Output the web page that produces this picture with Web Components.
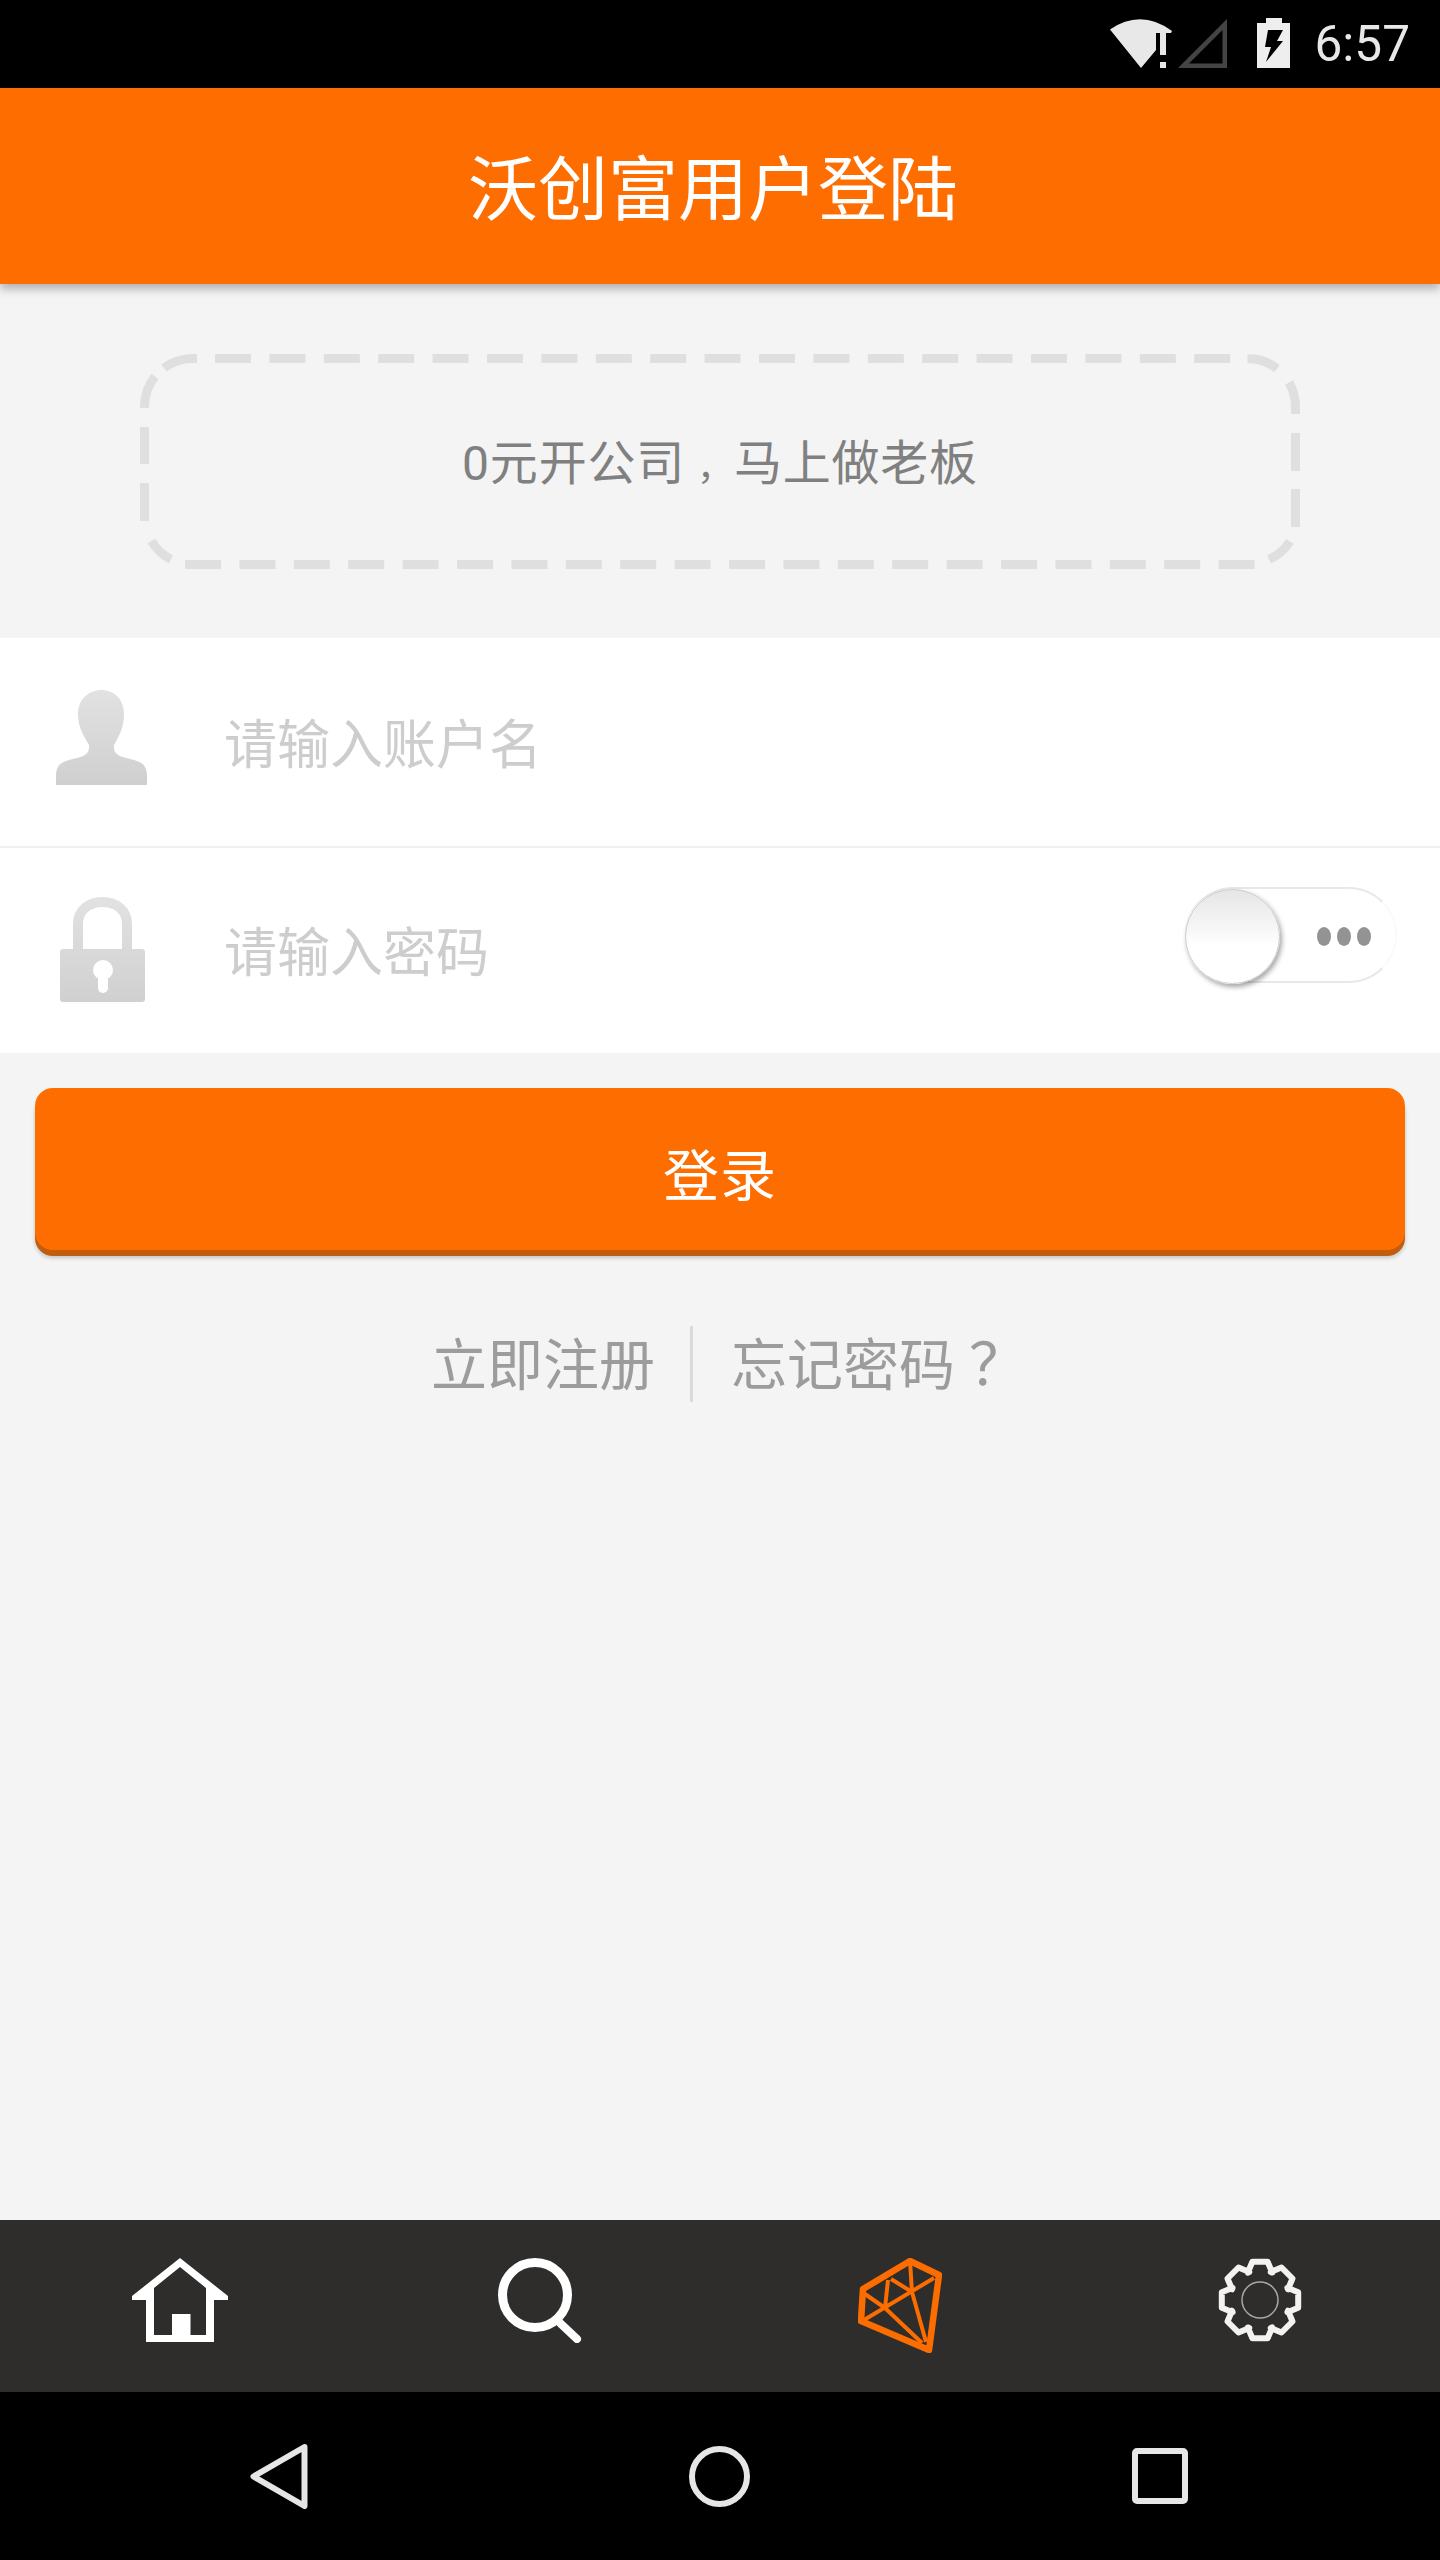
<!DOCTYPE html>
<html lang="zh-CN">
<head>
<meta charset="utf-8">
<title>沃创富用户登陆</title>
<style>
html, body { margin: 0; padding: 0; }
body {
  width: 1440px;
  height: 2560px;
  display: flex;
  flex-direction: column;
  background: #f4f4f4;
  font-family: Roboto, "Noto Sans CJK SC", sans-serif;
  overflow: hidden;
}
login-page { flex: 1; }
</style>
</head>
<body>
<status-bar time="6:57"></status-bar>
<app-header>沃创富用户登陆</app-header>
<login-page>
  <promo-banner>0元开公司<span style="padding-left:12px;font-size:36px">，</span>马上做老板</promo-banner>
  <login-form>
    <input-row placeholder="请输入账户名">
      <svg slot="icon" style="margin-bottom:9px" width="91" height="95" viewBox="0 0 91 95">
        <defs><linearGradient id="pg" x1="0" y1="0" x2="0" y2="1"><stop offset="0" stop-color="#e2e2e2"/><stop offset="1" stop-color="#cfcfcf"/></linearGradient></defs>
        <path fill="url(#pg)" d="M45.5 0C58 0 68 9 68 24C68 38 63 46 58 55C57 63 62 66 70 68C82 71 91 72 91 86V95H0V86C0 72 9 71 21 68C29 66 34 63 33 55C28 46 22 38 22 24C22 9 33 0 45.5 0Z"/>
      </svg>
    </input-row>
    <input-row placeholder="请输入密码" divider>
      <svg slot="icon" style="margin-bottom:2px" width="85" height="105" viewBox="0 0 85 105">
        <defs><linearGradient id="lg" gradientUnits="userSpaceOnUse" x1="0" y1="0" x2="0" y2="105"><stop offset="0" stop-color="#e2e2e2"/><stop offset="1" stop-color="#d0d0d0"/></linearGradient></defs>
        <path fill="none" stroke="url(#lg)" stroke-width="10" d="M18 54V27C18 13 29 5 42.5 5C56 5 67 13 67 27V54"/>
        <rect x="0" y="52" width="85" height="53" rx="3" fill="url(#lg)"/>
        <circle cx="43" cy="73" r="10" fill="#fff"/>
        <rect x="38" y="73" width="10" height="23" rx="5" fill="#fff"/>
      </svg>
      <toggle-switch slot="end"></toggle-switch>
    </input-row>
  </login-form>
  <primary-button>登录</primary-button>
  <link-row>
    <span>立即注册</span>
    <span>忘记密码<span style="font-family:'Noto Sans CJK JP';font-size:58px;line-height:0;padding-left:14px">？</span></span>
  </link-row>
</login-page>
<tab-bar>
  <tab-item>
    <svg width="96" height="84" viewBox="0 0 96 84"><path fill="#fff" fill-rule="evenodd" d="M48 0L96 38V42H82V84H14V42H0V38ZM48 9L22 30V77H40V56H58.5V77H74V30Z"/></svg>
  </tab-item>
  <tab-item>
    <svg width="84" height="85" viewBox="0 0 84 85"><circle cx="37" cy="37" r="32.500" fill="none" stroke="#fff" stroke-width="9"/><path d="M62 65L79 81" stroke="#fff" stroke-width="8" stroke-linecap="round"/></svg>
  </tab-item>
  <tab-item>
    <svg width="84" height="95" viewBox="0 0 84 95" fill="none" stroke="#fb6d00" stroke-linejoin="round">
      <path stroke-width="6.500" d="M52 3L81 17L71 92L3 63L5 31Z"/>
      <path stroke-width="4" d="M6 62L76 20M52 3L54 34L68 84M30 22L27 50M7 36L27 50L64 85M33 21L54 34"/>
    </svg>
  </tab-item>
  <tab-item><gear-icon></gear-icon></tab-item>
</tab-bar>
<nav-bar></nav-bar>

<script>
const statusTpl = document.createElement("template");
statusTpl.innerHTML = `
<style>
:host{ display:flex; height:88px; background:#000; align-items:flex-start; padding-right:30px; justify-content:flex-end; box-sizing:border-box; color:#e8e8e8; }
svg{ display:block; margin-top:19px; }
.signal{ margin-left:6px; }
.battery{ margin-left:30px; margin-top:18px; }
.time{ margin-left:25px; font:49.5px/88px Roboto, sans-serif; }
</style>
<svg width="62" height="49" viewBox="0 0 62 49"><path fill="#e8e8e8" d="M0 10.5Q31 -10.500 62 12L61 14H46V31L31 49Z"/><rect x="50" y="14" width="6" height="22" fill="#e8e8e8"/><rect x="50" y="43" width="6" height="6" fill="#e8e8e8"/></svg>
<svg class="signal" width="49" height="49" viewBox="0 0 49 49"><path fill="#444" fill-rule="evenodd" d="M0 49L49 0V49ZM11 44.500H44.500V11Z"/></svg>
<svg class="battery" width="33" height="50" viewBox="0 0 33 50"><path fill="#eee" d="M9 0H25V5H33V50H0V5H9Z"/><path fill="#000" d="M11 12H26L20 23H26L9 44L14 29H8Z"/></svg>
<span class="time"></span>
`;
class StatusBar extends HTMLElement {
  constructor() {
    super();
    this.attachShadow({ mode: "open" });
    this.shadowRoot.appendChild(statusTpl.content.cloneNode(true));
    this.shadowRoot.querySelector(".time").textContent = this.getAttribute("time");
  }
}
customElements.define("status-bar", StatusBar);

class AppHeader extends HTMLElement {
  constructor() {
    super();
    this.attachShadow({ mode: "open" }).innerHTML = `
<style>
:host{ display:flex; position:relative; z-index:1; height:196px; box-sizing:border-box; background:#fd6d00; color:#fff; align-items:center; justify-content:center; padding:0 14px 3px 0; font-size:70px; box-shadow:0 5px 9px rgba(0,0,0,.28); }
</style>
<slot></slot>`;
  }
}
customElements.define("app-header", AppHeader);

class LoginPage extends HTMLElement {
  constructor() {
    super();
    this.attachShadow({ mode: "open" }).innerHTML = `
<style>:host{ display:block; }</style>
<slot></slot>`;
  }
}
customElements.define("login-page", LoginPage);

class PromoBanner extends HTMLElement {
  constructor() {
    super();
    this.attachShadow({ mode: "open" }).innerHTML = `
<style>
:host{ display:block; padding:70px 140px 69px; }
.box{ position:relative; height:215px; box-sizing:border-box; padding-bottom:6px; display:flex; align-items:center; justify-content:center; color:#808080; font-size:48px; letter-spacing:.8px; }
.text{ display:block; }
svg{ position:absolute; left:0; top:0; }
</style>
<div class="box">
  <svg width="1160" height="215" viewBox="0 0 1160 215" fill="none" stroke="#dfdfdf" stroke-width="9">
    <path stroke-dasharray="36 18.400" d="M75 4.500H1108.600M45 210.500H1114.600"/>
    <path d="M1107.500 4.500H1108.600M1107.500 4.500A48 48 0 0 1 1137 14.600M1149 28.500A48 48 0 0 1 1155.500 52.500V60"/>
    <path d="M1155.500 79V117M1155.500 135V173M1150 187.500A48 48 0 0 1 1129 205.400"/>
    <path d="M11.500 187A48 48 0 0 0 31 205.400M4.500 73V110M4.500 129V167M4.500 54V52.500A48 48 0 0 1 15 22.500M24 14A48 48 0 0 1 52.500 4.500H57"/>
  </svg>
  <div class="text"><slot></slot></div>
</div>`;
  }
}
customElements.define("promo-banner", PromoBanner);

class LoginForm extends HTMLElement {
  constructor() {
    super();
    this.attachShadow({ mode: "open" }).innerHTML = `
<style>:host{ display:block; background:#fff; }</style>
<slot></slot>`;
  }
}
customElements.define("login-form", LoginForm);

class InputRow extends HTMLElement {
  constructor() {
    super();
    this.attachShadow({ mode: "open" }).innerHTML = `
<style>
:host{ display:flex; align-items:center; height:208px; box-sizing:border-box; padding-right:43px; }
:host([divider]){ height:207px; border-top:2px solid #f0f0f0; }
.icon{ width:224px; flex:none; box-sizing:border-box; padding-left:56px; display:flex; }
:host([divider]) .icon{ padding-left:60px; }
.hint{ flex:1; color:#cdcdcd; font-size:53px; padding-bottom:3px; }
::slotted(svg){ display:block; }
::slotted(toggle-switch){ align-self:flex-start; margin-top:39px; }
</style>
<div class="icon"><slot name="icon"></slot></div>
<div class="hint"></div>
<slot name="end"></slot>`;
    this.shadowRoot.querySelector(".hint").textContent = this.getAttribute("placeholder");
  }
}
customElements.define("input-row", InputRow);

class ToggleSwitch extends HTMLElement {
  constructor() {
    super();
    this.attachShadow({ mode: "open" }).innerHTML = `
<style>
:host{ display:flex; align-items:center; position:relative; width:212px; height:96px; box-sizing:border-box; border:2px solid #e8e8e8; border-left:none; border-right-color:#fafafa; border-radius:48px; }
.knob{ position:absolute; left:0; top:0; width:95px; height:95px; border-radius:50%; box-sizing:border-box; background:linear-gradient(#e6e6e6,#f8f8f8 45%,#fff 60%); border:1px solid #ccc; box-shadow:2px 3px 5px rgba(0,0,0,.35); }
.dots{ margin:2px 0 0 132px; display:flex; gap:6px; }
.dots i{ width:14px; height:19px; border-radius:50%; background:#939393; }
</style>
<div class="knob"></div>
<div class="dots"><i></i><i></i><i></i></div>`;
  }
}
customElements.define("toggle-switch", ToggleSwitch);

class PrimaryButton extends HTMLElement {
  constructor() {
    super();
    this.attachShadow({ mode: "open" }).innerHTML = `
<style>
:host{ display:flex; align-items:center; justify-content:center; height:162px; box-sizing:border-box; padding-top:4px; margin:35px 35px 0; border-radius:18px; background:#fd6d00; color:#fff; font-size:56px; letter-spacing:1px; box-shadow:0 6px 0 #c25c0f, 0 8px 4px rgba(0,0,0,.2); }
</style>
<slot></slot>`;
  }
}
customElements.define("primary-button", PrimaryButton);

class LinkRow extends HTMLElement {
  constructor() {
    super();
    this.attachShadow({ mode: "open" }).innerHTML = `
<style>
:host{ display:flex; margin-top:76px; padding-left:431px; color:#9c9c9c; font-size:56px; }
::slotted(span){ display:block; height:76px; line-height:81px; }
::slotted(span:first-child){ padding-right:35px; border-right:3px solid #dadada; }
::slotted(span:last-child){ padding-left:38px; }
</style>
<slot></slot>`;
  }
}
customElements.define("link-row", LinkRow);

class TabBar extends HTMLElement {
  constructor() {
    super();
    this.attachShadow({ mode: "open" }).innerHTML = `
<style>
:host{ display:grid; grid-template-columns:repeat(4,1fr); height:172px; background:#2e2d2b; }
</style>
<slot></slot>`;
  }
}
customElements.define("tab-bar", TabBar);

class TabItem extends HTMLElement {
  constructor() {
    super();
    this.attachShadow({ mode: "open" }).innerHTML = `
<style>
:host{ display:flex; justify-content:center; align-items:flex-start; padding-top:38px; }
::slotted(svg){ display:block; }
</style>
<slot></slot>`;
  }
}
customElements.define("tab-item", TabItem);

class GearIcon extends HTMLElement {
  constructor() {
    super();
    const pts = [];
    for (let i = 0; i < 8; i++) {
      const a = (i * Math.PI) / 4 - Math.PI / 2;
      const at = (r, d) => [(42 + r * Math.cos(a + d)).toFixed(1), (42 + r * Math.sin(a + d)).toFixed(1)].join(" ");
      pts.push(at(30, -0.42), at(39, -0.2), at(39, 0.2), at(30, 0.42));
    }
    this.attachShadow({ mode: "open" }).innerHTML = `
<style>:host{ display:block; width:84px; height:84px; } svg{ display:block; }</style>
<svg width="84" height="84" viewBox="0 0 84 84" fill="none">
  <path d="M${pts.join("L")}Z" stroke="#f2f2f2" stroke-width="6" stroke-linejoin="round"/>
  <circle cx="42" cy="42" r="18" stroke="#a8a8a8" stroke-width="1.500"/>
</svg>`;
  }
}
customElements.define("gear-icon", GearIcon);

const navTpl = document.createElement("template");
navTpl.innerHTML = `
<style>
:host{ display:grid; grid-template-columns:repeat(3,1fr); height:168px; box-sizing:border-box; background:#000; padding:0 60px 0 59px; }
div{ display:flex; align-items:center; justify-content:center; }
svg{ display:block; fill:none; stroke:#e6e6e6; stroke-width:6; }
</style>
<div><svg width="58" height="65" viewBox="0 0 58 65" stroke-linejoin="round"><path d="M54.500 3L3.500 32.500L54.500 62Z"/></svg></div>
<div><svg width="61" height="61" viewBox="0 0 61 61"><circle cx="30.500" cy="30.500" r="27.500"/></svg></div>
<div><svg width="56" height="56" viewBox="0 0 56 56"><rect x="3" y="3" width="50" height="50" rx="2"/></svg></div>
`;
class NavBar extends HTMLElement {
  constructor() {
    super();
    this.attachShadow({ mode: "open" });
    this.shadowRoot.appendChild(navTpl.content.cloneNode(true));
  }
}
customElements.define("nav-bar", NavBar);
</script>
</body>
</html>
